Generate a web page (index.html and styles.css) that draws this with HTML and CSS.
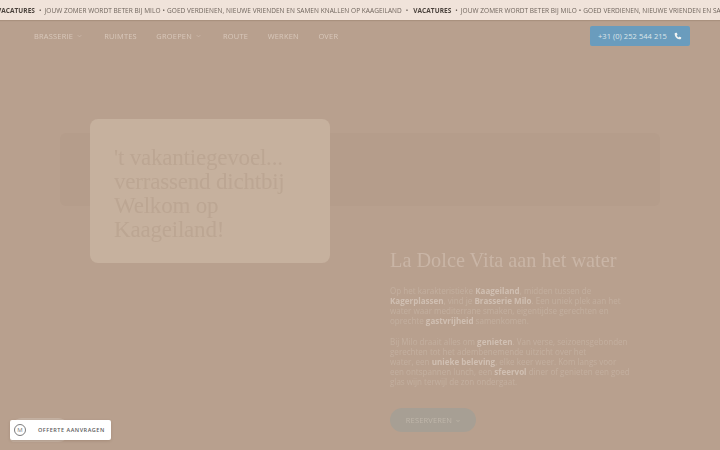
FILE: index.html
```html
<!DOCTYPE html>
<html lang="nl">
<head>
<meta charset="utf-8">
<title>Brasserie Milo</title>
<link rel="stylesheet" href="styles.css">
</head>
<body>
<div class="ticker">
  <div class="ticker-track">
    <b>VACATURES</b><span class="dot">•</span><span>JOUW ZOMER WORDT BETER BIJ MILO</span><span class="dot tight">•</span><span>GOED VERDIENEN, NIEUWE VRIENDEN EN SAMEN KNALLEN OP KAAGEILAND</span><span class="dot wide">•</span><b>VACATURES</b><span class="dot">•</span><span>JOUW ZOMER WORDT BETER BIJ MILO</span><span class="dot tight">•</span><span>GOED VERDIENEN, NIEUWE VRIENDEN EN SAMEN KNALLEN OP KAAGEILAND</span>
  </div>
</div>
<header class="nav">
  <nav class="menu">
    <a class="item has-sub">BRASSERIE<svg class="chev" viewBox="0 0 8 5"><path d="M1 1l3 3 3-3" fill="none" stroke="currentColor"/></svg></a>
    <a class="item">RUIMTES</a>
    <a class="item has-sub">GROEPEN<svg class="chev" viewBox="0 0 8 5"><path d="M1 1l3 3 3-3" fill="none" stroke="currentColor"/></svg></a>
    <a class="item">ROUTE</a>
    <a class="item">WERKEN</a>
    <a class="item">OVER</a>
  </nav>
  <a class="phone">+31 (0) 252 544 215
    <svg class="phone-icon" viewBox="0 0 24 24"><path fill="currentColor" d="M6.600 2.200 3.400 3C2.500 3.300 2 4 2 5c.3 9.500 7.500 16.700 17 17 1 0 1.700-.5 2-1.400l.8-3.200c.2-.8-.2-1.500-.9-1.800l-3.700-1.500c-.7-.3-1.400-.1-1.900.5l-1.300 1.700c-2.600-1.300-4.600-3.300-5.900-5.900l1.700-1.300c.6-.5.8-1.200.5-1.900L8.800 3.100c-.4-.7-1.400-1.100-2.200-.9z"/></svg>
  </a>
</header>
<main class="page">
  <section class="hero">
    <div class="band"></div>
    <div class="card">
      <h1>'t vakantiegevoel...<br>verrassend dichtbij<br>Welkom op<br>Kaageiland!</h1>
    </div>
  </section>
  <section class="intro">
    <h2>La Dolce Vita aan het water</h2>
    <p>Op het karakteristieke <b>Kaageiland</b>, midden tussen de <b>Kagerplassen</b>, vind je <b>Brasserie Milo</b>. Een uniek plek aan het water waar mediterrane smaken, eigentijdse gerechten en oprechte <b>gastvrijheid</b> samenkomen.</p>
    <p>Bij Milo draait alles om <b>genieten</b>. Van verse, seizoensgebonden gerechten tot het adembenemende uitzicht over het<br>water, een <b>unieke beleving</b>, elke keer weer. Kom langs voor<br>een ontspannen lunch, een <b>sfeervol</b> diner of genieten een goed<br>glas wijn terwijl de zon ondergaat.</p>
    <a class="reserve">RESERVEREN<svg class="reserve-chev" viewBox="0 0 8 6"><path d="M1 1l3 3.500 3-3.500" fill="none" stroke="currentColor" stroke-width="1.500"/></svg></a>
  </section>
</main>
<a class="quote">
  <span class="logo">M</span>
  <span class="quote-label">OFFERTE AANVRAGEN</span>
</a>
</body>
</html>
```
FILE: styles.css
```css
* { box-sizing: border-box; }
html, body { margin: 0; height: 100%; }
body {
  width: 720px;
  height: 450px;
  overflow: hidden;
  background: #b8a08e;
  font-family: "Open Sans", sans-serif;
  position: relative;
}
.ticker {
  height: 20px;
  background: #f0e3da;
  overflow: hidden;
  box-shadow: 0 1px 1px rgba(90, 60, 40, .15);
}
.ticker-track {
  display: flex;
  align-items: center;
  height: 20px;
  margin-left: -3px;
  white-space: nowrap;
  font-size: 6.500px;
  letter-spacing: .05px;
  color: #6e645c;
  filter: blur(.3px);
}
.ticker-track b { color: #4a423c; font-weight: 700; }
.dot { margin: 0 3px 0 4px; }
.dot.tight { margin: 0 2px; }
.dot.wide { margin: 0 5px 0 4px; }
.nav {
  height: 32px;
  display: flex;
  align-items: center;
  justify-content: space-between;
  padding: 0 30px 0 34px;
}
.menu {
  display: flex;
  margin-top: -1px;
  color: #d8c8bb;
  font-size: 7.400px;
  letter-spacing: .25px;
  filter: blur(.3px);
}
.item { margin-right: 19.500px; white-space: nowrap; }
.item.has-sub { margin-right: 22px; }
.chev { width: 5px; height: 4px; margin-left: 4px; vertical-align: 1px; opacity: .8; }
.phone {
  display: flex;
  align-items: center;
  justify-content: space-between;
  width: 100px;
  height: 20px;
  padding: 0 8px;
  border-radius: 2px;
  background: #6a9cbd;
  color: #dce6ea;
  font-size: 7.500px;
  letter-spacing: .05px;
  white-space: nowrap;
}
.phone-icon { flex: none; width: 8px; height: 8px; color: #f1f3f2; }
.page {
  display: grid;
  grid-template-columns: 1fr;
  padding: 67px 60px 0;
}
.hero { display: grid; height: 111px; }
.band, .card { grid-area: 1 / 1; }
.band {
  height: 73px;
  margin-top: 14px;
  border-radius: 6px;
  background: #b59d8b;
}
.card {
  width: 240px;
  height: 144px;
  margin-left: 30px;
  padding: 27px 24px;
  border-radius: 8px;
  background: #c6b19e;
  position: relative;
}
h1 {
  margin: 0;
  font-family: "Liberation Serif", serif;
  font-weight: 400;
  font-size: 23px;
  line-height: 24px;
  letter-spacing: -.2px;
  color: #bca693;
  filter: blur(.3px);
}
.intro {
  width: 243px;
  margin: 18px 0 0 330px;
  color: #c3af9f;
  font-size: 8.050px;
  line-height: 10.050px;
  filter: blur(.4px);
}
h2 {
  margin: 0 0 14px;
  font-family: "Liberation Serif", serif;
  font-weight: 400;
  font-size: 20.300px;
  line-height: 24px;
  color: #c9b5a6;
  white-space: nowrap;
}
.intro p { margin: 0 0 11px; }
.intro b { color: #d0bfb2; font-weight: 700; }
.reserve {
  display: inline-flex;
  align-items: center;
  justify-content: center;
  gap: 4px;
  width: 86px;
  height: 24px;
  margin-top: 10px;
  border-radius: 12px;
  background: #a79f94;
  color: #bfb6aa;
  font-size: 7.500px;
  letter-spacing: .15px;
}
.reserve-chev { flex: none; width: 4px; height: 4px; margin-top: 1px; }
.quote {
  position: absolute;
  left: 10px;
  top: 420px;
  width: 101px;
  height: 20px;
  display: flex;
  align-items: center;
  gap: 12px;
  padding: 0 4px;
  background: #fff;
  border-radius: 2px;
  box-shadow: 0 1px 3px rgba(90, 60, 40, .2);
}
.quote::before {
  content: "";
  position: absolute;
  left: 0;
  top: -2px;
  width: 60px;
  height: 24px;
  border-radius: 12px 12px 12px 4px;
  background: rgba(255, 255, 255, .18);
  z-index: -1;
}
.logo {
  flex: none;
  width: 12px;
  height: 12px;
  border: 1px solid #7c7c7d;
  border-radius: 50%;
  display: flex;
  align-items: center;
  justify-content: center;
  font-size: 6px;
  color: #7c7c7d;
}
.quote-label {
  color: #5a5a5a;
  font-size: 5.500px;
  font-weight: 600;
  letter-spacing: .52px;
  white-space: nowrap;
}
```
